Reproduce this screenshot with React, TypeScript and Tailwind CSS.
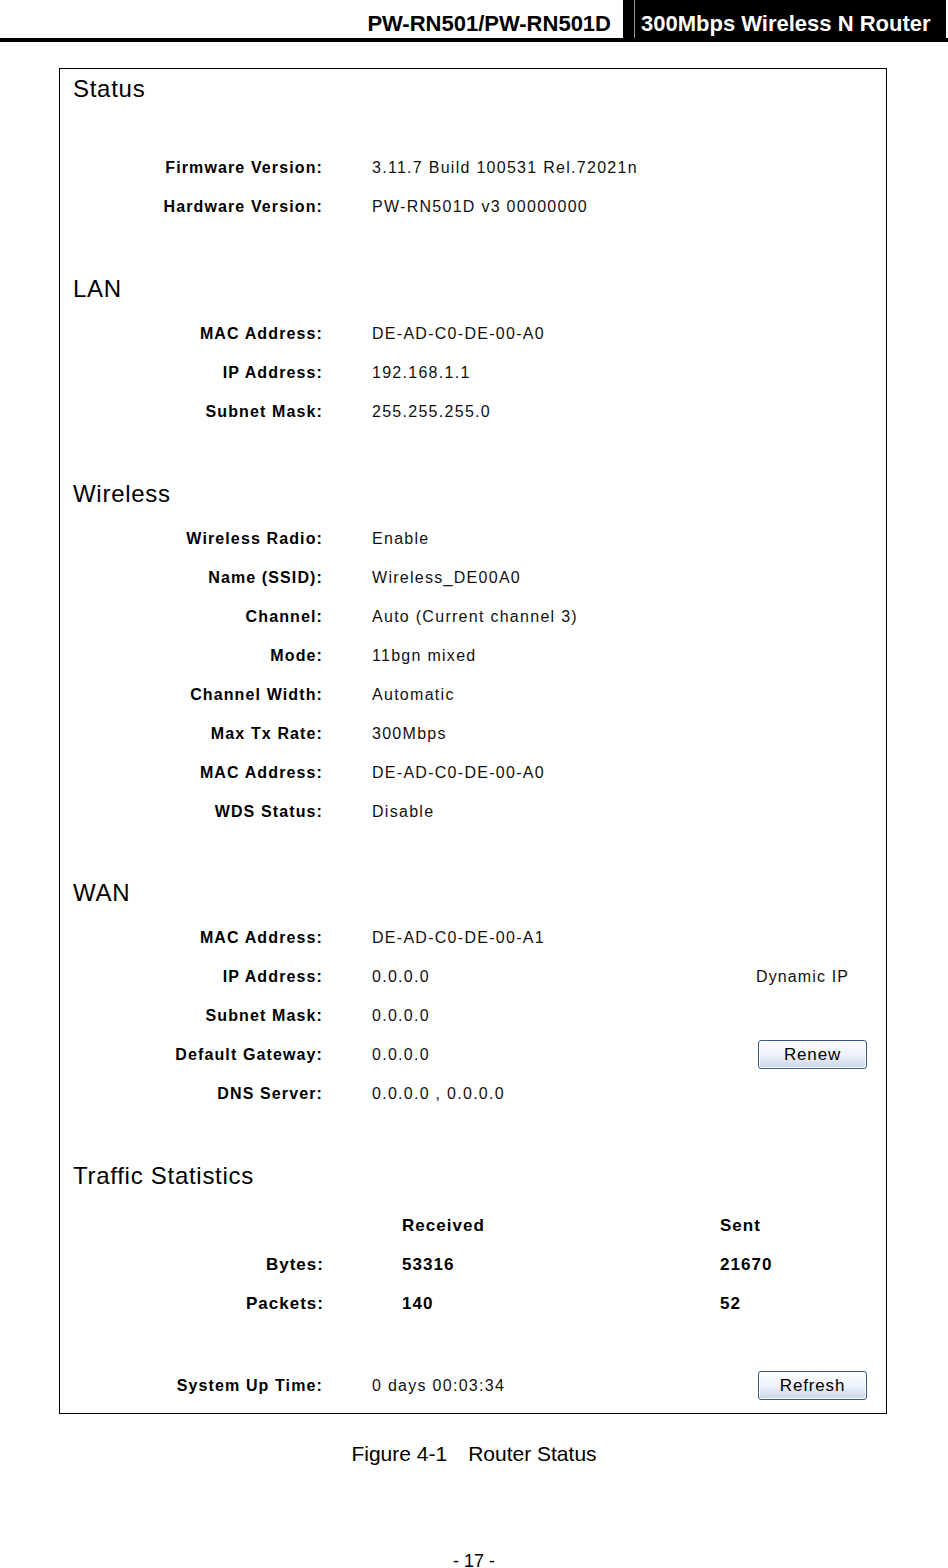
import React from "react";

type Row = { label: string; value: string; extra?: React.ReactNode };

const FONT = { fontFamily: '"Liberation Sans", Arial, sans-serif' };

function Heading({ children }: { children: React.ReactNode }) {
  return (
    <div className="h-[40px] flex items-center pl-[13px] text-[24px] text-black tracking-[0.03em]">
      {children}
    </div>
  );
}

function InfoRow({ label, value, extra }: Row) {
  return (
    <div className="h-[39px] flex items-center text-[16px] text-black">
      <div className="w-[263px] text-right font-bold tracking-[0.07em] shrink-0">{label}</div>
      <div className="w-[49px] shrink-0" />
      <div className="flex-1 tracking-[0.08em] text-[#111]">{value}</div>
      {extra && <div className="w-[130px] shrink-0 flex items-center">{extra}</div>}
    </div>
  );
}

function Button({ label }: { label: string }) {
  return (
    <button className="ml-[2px] w-[109px] h-[29px] rounded-[3px] border border-[#3c5a86] bg-gradient-to-b from-[#ffffff] via-[#eef2fa] to-[#c9d5ea] text-[17px] text-black tracking-[0.05em] leading-none shadow-[inset_0_0_0_1px_#ffffff]">
      {label}
    </button>
  );
}

const STATUS: Row[] = [
  { label: "Firmware Version:", value: "3.11.7 Build 100531 Rel.72021n" },
  { label: "Hardware Version:", value: "PW-RN501D v3 00000000" },
];

const LAN: Row[] = [
  { label: "MAC Address:", value: "DE-AD-C0-DE-00-A0" },
  { label: "IP Address:", value: "192.168.1.1" },
  { label: "Subnet Mask:", value: "255.255.255.0" },
];

const WIRELESS: Row[] = [
  { label: "Wireless Radio:", value: "Enable" },
  { label: "Name (SSID):", value: "Wireless_DE00A0" },
  { label: "Channel:", value: "Auto (Current channel 3)" },
  { label: "Mode:", value: "11bgn mixed" },
  { label: "Channel Width:", value: "Automatic" },
  { label: "Max Tx Rate:", value: "300Mbps" },
  { label: "MAC Address:", value: "DE-AD-C0-DE-00-A0" },
  { label: "WDS Status:", value: "Disable" },
];

export default function App() {
  return (
    <div className="w-[948px] h-[1568px] bg-white relative" style={FONT}>
      {/* page header */}
      <div className="h-[42px] flex border-b-[4px] border-black">
        <div className="flex-1 flex items-end pb-[3px] justify-end pr-[12px] text-[22px] leading-none font-bold text-black">
          PW-RN501/PW-RN501D
        </div>
        <div className="w-[323px] bg-black flex items-end mr-[2px]">
          <div className="w-px h-[38px] bg-[#999] ml-[11px]" />
          <span className="pl-[6px] pb-[3px] text-[22px] leading-none font-bold text-white">300Mbps Wireless N Router</span>
        </div>
      </div>

      {/* router status panel */}
      <div className="ml-[59px] mt-[26px] w-[828px] border border-black pb-[8px]">
        <Heading>Status</Heading>
        <div className="h-[39px]" />
        {STATUS.map((r) => (
          <InfoRow key={r.label} {...r} />
        ))}

        <div className="h-[43px]" />
        <Heading>LAN</Heading>
        <div className="h-[5px]" />
        {LAN.map((r) => (
          <InfoRow key={r.label} {...r} />
        ))}

        <div className="h-[43px]" />
        <Heading>Wireless</Heading>
        <div className="h-[5px]" />
        {WIRELESS.map((r, i) => (
          <InfoRow key={i} {...r} />
        ))}

        <div className="h-[42px]" />
        <Heading>WAN</Heading>
        <div className="h-[5px]" />
        <InfoRow label="MAC Address:" value="DE-AD-C0-DE-00-A1" />
        <InfoRow
          label="IP Address:"
          value="0.0.0.0"
          extra={<span className="tracking-[0.07em] text-[#111]">Dynamic IP</span>}
        />
        <InfoRow label="Subnet Mask:" value="0.0.0.0" />
        <InfoRow label="Default Gateway:" value="0.0.0.0" extra={<Button label="Renew" />} />
        <InfoRow label="DNS Server:" value="0.0.0.0 , 0.0.0.0" />

        <div className="h-[43px]" />
        <Heading>Traffic Statistics</Heading>
        <div className="h-[10px]" />
        <div className="text-[17px] font-bold text-black tracking-[0.06em]">
          <div className="h-[39px] flex items-center">
            <div className="w-[264px] shrink-0" />
            <div className="w-[78px] shrink-0" />
            <div className="w-[318px] shrink-0">Received</div>
            <div>Sent</div>
          </div>
          {[
            ["Bytes:", "53316", "21670"],
            ["Packets:", "140", "52"],
          ].map(([l, r, s]) => (
            <div key={l} className="h-[39px] flex items-center">
              <div className="w-[264px] shrink-0 text-right">{l}</div>
              <div className="w-[78px] shrink-0" />
              <div className="w-[318px] shrink-0">{r}</div>
              <div>{s}</div>
            </div>
          ))}
        </div>

        <div className="h-[43px]" />
        <InfoRow label="System Up Time:" value="0 days 00:03:34" extra={<Button label="Refresh" />} />
      </div>

      {/* caption */}
      <div className="mt-[24px] text-center text-[21px] text-black">
        Figure 4-1<span className="inline-block w-[21px]" />Router Status
      </div>

      <div className="absolute left-0 right-0 top-[1548px] text-center text-[18px] text-black">- 17 -</div>
    </div>
  );
}
